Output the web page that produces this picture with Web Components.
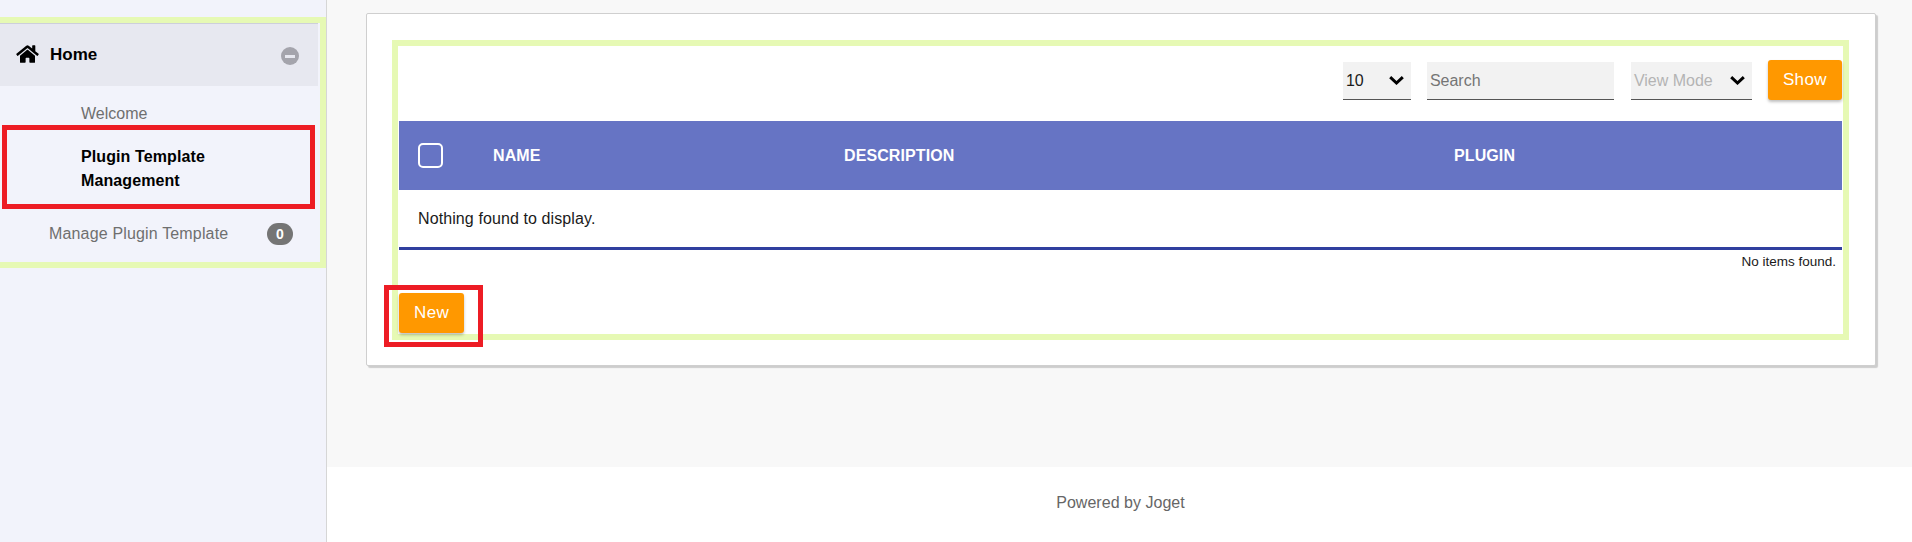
<!DOCTYPE html>
<html>
<head>
<meta charset="utf-8">
<title>Plugin Template Management</title>
<style>
  html, body { margin: 0; height: 542px; overflow: hidden; }
  body { font-family: "Liberation Sans", Arial, sans-serif; font-size: 16px; }
</style>
</head>
<body>
<app-shell>
  <side-bar slot="side">
    <side-category label="Home"></side-category>
    <side-item>Welcome</side-item>
    <side-item active marked>Plugin Template Management</side-item>
    <side-item sub count="0">Manage Plugin Template</side-item>
  </side-bar>
  <list-card>
    <filter-bar slot="filters"></filter-bar>
    <data-table slot="table"></data-table>
    <orange-button slot="actions" marked>New</orange-button>
  </list-card>
  <page-footer slot="footer">Powered by Joget</page-footer>
</app-shell>

<script>
const GREEN = '#e6f9b4';
const RED = '#ed1c24';
const ORANGE = '#ff9800';

class AppShell extends HTMLElement {
  constructor() {
    super();
    this.attachShadow({ mode: 'open' }).innerHTML = `
      <style>
        :host { display: grid; grid-template-columns: 327px 1fr; height: 542px; }
        .main { display: flex; flex-direction: column; background: #f8f8f8; min-width: 0; }
        .content { height: 467px; padding: 13px 36px 0 39px; box-sizing: border-box; }
      </style>
      <slot name="side"></slot>
      <div class="main">
        <div class="content"><slot></slot></div>
        <slot name="footer"></slot>
      </div>`;
  }
}

class SideBar extends HTMLElement {
  constructor() {
    super();
    this.attachShadow({ mode: 'open' }).innerHTML = `
      <style>
        :host { display: block; background: #f2f3fb; border-right: 1px solid #d6d6d6; padding-top: 17px; box-sizing: border-box; }
        .outline { border: 6px solid ${GREEN}; border-left: 0; height: 239px; }
      </style>
      <div class="outline"><slot></slot></div>`;
  }
}

class SideCategory extends HTMLElement {
  constructor() {
    super();
    this.attachShadow({ mode: 'open' }).innerHTML = `
      <style>
        :host { display: block; margin-right: 2px; }
        .head { display: flex; align-items: center; height: 62px; padding: 0 19px 0 16px; background: #e7e8f0; border-top: 1px solid #cdcfda; color: #000; font-weight: bold; font-size: 17px; }
        svg.home { width: 23px; height: 20px; margin-right: 11px; margin-top: -2px; }
        .label { flex: 1; margin-top: 0; }
        .toggle { width: 18px; height: 18px; margin-top: 2px; border-radius: 50%; background: #a4a4ac; display: flex; align-items: center; justify-content: center; }
        .toggle i { display: block; width: 10px; height: 3px; background: #e7e8f0; }
      </style>
      <div class="head">
        <svg class="home" viewBox="0 0 576 512"><path fill="#000" d="M280.37 148.26L96 300.11V464a16 16 0 0 0 16 16l112.06-.29a16 16 0 0 0 15.92-16V368a16 16 0 0 1 16-16h64a16 16 0 0 1 16 16v95.64a16 16 0 0 0 16 16.05L464 480a16 16 0 0 0 16-16V300L295.67 148.26a12.19 12.19 0 0 0-15.3 0zM571.6 251.47L488 182.56V44.05a12 12 0 0 0-12-12h-56a12 12 0 0 0-12 12v72.61L318.47 43a48 48 0 0 0-61 0L4.34 251.47a12 12 0 0 0-1.6 16.9l25.5 31A12 12 0 0 0 45.15 301l235.22-193.74a12.19 12.19 0 0 1 15.3 0L530.9 301a12 12 0 0 0 16.9-1.6l25.5-31a12 12 0 0 0-1.7-16.93z"/></svg>
        <span class="label">${this.getAttribute('label')}</span>
        <span class="toggle"><i></i></span>
      </div>`;
  }
}

class SideItem extends HTMLElement {
  constructor() {
    super();
    const count = this.getAttribute('count');
    this.attachShadow({ mode: 'open' }).innerHTML = `
      <style>
        :host { display: flex; position: relative; align-items: center; height: 39px; padding: 17px 27px 0 81px; box-sizing: border-box; color: #6f6f6f; line-height: 24px; }
        :host([active]) { height: 84px; padding: 3px 90px 0 81px; color: #000; font-weight: bold; letter-spacing: .1px; }
        :host([sub]) { height: 53px; padding: 0 27px 4px 49px; letter-spacing: .16px; }
        .text { flex: 1; }
        .badge { background: #757575; color: #fff; font-weight: bold; font-size: 14px; line-height: 22px; width: 26px; text-align: center; border-radius: 11px; }
        .mark { position: absolute; left: 2px; right: 5px; top: 0; bottom: 0; border: 5px solid ${RED}; }
      </style>
      <span class="text"><slot></slot></span>
      ${count !== null ? `<span class="badge">${count}</span>` : ''}
      ${this.hasAttribute('marked') ? '<div class="mark"></div>' : ''}`;
  }
}

class ListCard extends HTMLElement {
  constructor() {
    super();
    this.attachShadow({ mode: 'open' }).innerHTML = `
      <style>
        :host { display: block; height: 353px; box-sizing: border-box; padding: 26px 26px 25px 25px; background: #fff; border: 1px solid #cfcfcf; border-radius: 2px; box-shadow: 2px 2px 1px #cdcdcd; }
        .outline { display: flex; flex-direction: column; height: 100%; box-sizing: border-box; border: 6px solid ${GREEN}; padding: 0 1px 1px; }
        .actions { margin-top: auto; }
      </style>
      <div class="outline">
        <slot name="filters"></slot>
        <slot name="table"></slot>
        <div class="actions"><slot name="actions"></slot></div>
      </div>`;
  }
}

class FilterField extends HTMLElement {
  constructor() {
    super();
    const chevron = this.hasAttribute('chevron')
      ? `<svg viewBox="0 0 15 9" width="15" height="9"><path d="M1.2 1.2 7.5 7 13.8 1.2" fill="none" stroke="#000" stroke-width="3"/></svg>`
      : '';
    this.attachShadow({ mode: 'open' }).innerHTML = `
      <style>
        :host { display: flex; align-items: center; justify-content: space-between; height: 38px; box-sizing: border-box; padding: 0 7px 0 3px; background: #f2f2f2; border-bottom: 1px solid #555; color: #1a1a1a; }
        :host([placeholder]) { color: #757575; }
        :host([muted]) { color: #b4b4b4; }
      </style>
      <span><slot></slot></span>${chevron}`;
  }
}

class OrangeButton extends HTMLElement {
  constructor() {
    super();
    this.attachShadow({ mode: 'open' }).innerHTML = `
      <style>
        :host { display: inline-block; position: relative; vertical-align: top; }
        .btn { display: flex; align-items: center; justify-content: center; height: 40px; padding: 0 15px; box-sizing: border-box; background: ${ORANGE}; color: #fff; border-radius: 3px; font-size: 17px; letter-spacing: .4px; box-shadow: 0 2px 3px rgba(0,0,0,.25); }
        .btn span { margin-top: -1px; }
        .mark { position: absolute; left: -15px; right: -19px; top: -8px; bottom: -14px; border: 5px solid ${RED}; }
      </style>
      <div class="btn"><span><slot></slot></span></div>
      ${this.hasAttribute('marked') ? '<div class="mark"></div>' : ''}`;
  }
}

class FilterBar extends HTMLElement {
  constructor() {
    super();
    this.attachShadow({ mode: 'open' }).innerHTML = `
      <style>
        :host { display: flex; justify-content: flex-end; align-items: flex-start; height: 75px; padding-top: 14px; box-sizing: border-box; }
        .size { width: 68px; margin: 2px 16px 0 0; }
        .search { width: 187px; margin: 2px 17px 0 0; }
        .mode { width: 121px; margin: 2px 16px 0 0; }
      </style>
      <filter-field class="size" chevron>10</filter-field>
      <filter-field class="search" placeholder>Search</filter-field>
      <filter-field class="mode" chevron muted>View Mode</filter-field>
      <orange-button>Show</orange-button>`;
  }
}

class DataTable extends HTMLElement {
  constructor() {
    super();
    this.attachShadow({ mode: 'open' }).innerHTML = `
      <style>
        :host { display: block; }
        .head { display: grid; grid-template-columns: 94px 351px 610px 1fr; align-items: center; height: 69px; background: #6674c4; color: #fff; font-weight: bold; }
        .head span { letter-spacing: .1px; }
        .check { width: 21px; height: 21px; margin-left: 19px; border: 2px solid #fff; border-radius: 5px; }
        .empty { height: 57px; padding: 0 19px; display: flex; align-items: center; color: #1a1a1a; letter-spacing: .1px; border-bottom: 3px solid #303f9f; }
        .pages { text-align: right; font-size: 13.5px; color: #1a1a1a; padding: 3px 6px 0 0; line-height: 17px; }
      </style>
      <div class="head">
        <div><div class="check"></div></div>
        <span>NAME</span>
        <span>DESCRIPTION</span>
        <span>PLUGIN</span>
      </div>
      <div class="empty">Nothing found to display.</div>
      <div class="pages">No items found.</div>`;
  }
}

class PageFooter extends HTMLElement {
  constructor() {
    super();
    this.attachShadow({ mode: 'open' }).innerHTML = `
      <style>
        :host { display: flex; flex: 1; align-items: center; justify-content: center; background: #fff; color: #666; padding-left: 2px; padding-bottom: 3px; letter-spacing: .03px; }
      </style>
      <slot></slot>`;
  }
}

customElements.define('app-shell', AppShell);
customElements.define('side-bar', SideBar);
customElements.define('side-category', SideCategory);
customElements.define('side-item', SideItem);
customElements.define('list-card', ListCard);
customElements.define('filter-field', FilterField);
customElements.define('orange-button', OrangeButton);
customElements.define('filter-bar', FilterBar);
customElements.define('data-table', DataTable);
customElements.define('page-footer', PageFooter);
</script>
</body>
</html>
